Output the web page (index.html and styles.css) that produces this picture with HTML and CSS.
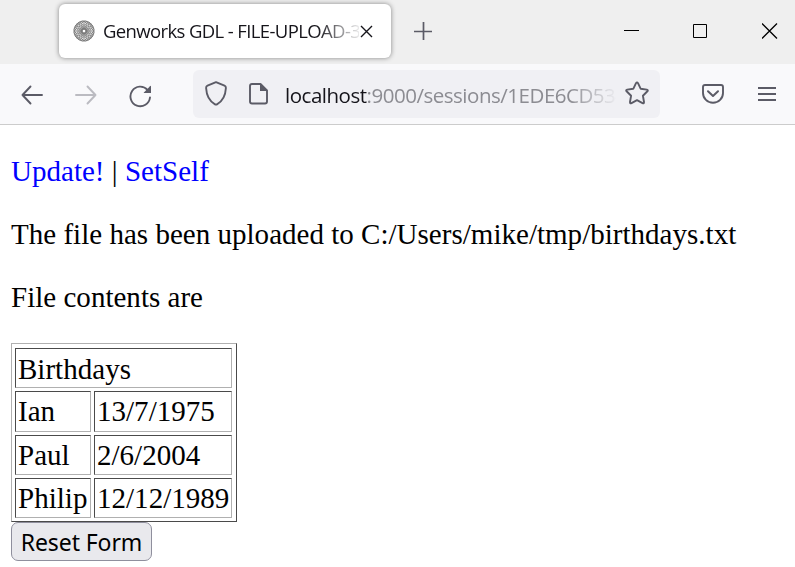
FILE: index.html
```html
<!DOCTYPE html>
<html lang="en">
<head>
<meta charset="utf-8">
<title>Genworks GDL</title>
<link rel="stylesheet" href="styles.css">
</head>
<body>
<header class="tabbar">
  <div class="tab">
    <svg class="favicon" width="22" height="22" viewBox="0 0 22 22">
      <defs>
        <g id="petals">
          <circle cx="11" cy="5.400" r="4.600"/>
          <circle cx="11" cy="5.400" r="4.600" transform="rotate(90 11 11)"/>
          <circle cx="11" cy="5.400" r="4.600" transform="rotate(180 11 11)"/>
          <circle cx="11" cy="5.400" r="4.600" transform="rotate(270 11 11)"/>
        </g>
      </defs>
      <g fill="none" stroke="#555" stroke-width=".5">
        <use href="#petals"/>
        <use href="#petals" transform="rotate(18 11 11)"/>
        <use href="#petals" transform="rotate(36 11 11)"/>
        <use href="#petals" transform="rotate(54 11 11)"/>
        <use href="#petals" transform="rotate(72 11 11)"/>
      </g>
      <circle cx="11" cy="11" r="1.500" fill="#fff"/>
    </svg>
    <span class="tab-title">Genworks GDL - FILE-UPLOAD-3</span>
    <svg class="tab-close" width="13" height="13" viewBox="0 0 13 13"><path d="M1 1l11 11M12 1L1 12" stroke="#15141a" stroke-width="1.4"/></svg>
  </div>
  <svg class="new-tab" width="18" height="18" viewBox="0 0 18 18"><path d="M9.500 0v18M0 9.500h18" stroke="#5b5b66" stroke-width="1.700"/></svg>
  <div class="window-controls">
    <svg width="16" height="16" viewBox="0 0 16 16"><path d="M0 7.500h15" stroke="#000"/></svg>
    <svg width="16" height="16" viewBox="0 0 16 16"><path d="M.5 1.500h13v13H.5z" fill="none" stroke="#000"/></svg>
    <svg width="16" height="16" viewBox="0 0 16 16"><path d="M0 .5l15 15M15 .5l-15 15" stroke="#000" stroke-width="1.300"/></svg>
  </div>
</header>
<nav class="toolbar">
  <svg class="back" width="22" height="20" viewBox="0 0 22 20"><path d="M9.500 1.500L1.500 10l8 8.500M1.500 10H21" fill="none" stroke="#5b5b66" stroke-width="1.900" stroke-linecap="round" stroke-linejoin="round"/></svg>
  <svg class="forward" width="22" height="20" viewBox="0 0 22 20"><path d="M12.500 1.500l8 8.500-8 8.500M20.500 10H1" fill="none" stroke="#bbbbc1" stroke-width="1.900" stroke-linecap="round" stroke-linejoin="round"/></svg>
  <svg class="reload" width="23" height="23" viewBox="0 0 23 23"><path d="M18.500 4.800A9.800 9.800 0 1 0 21 12.500" fill="none" stroke="#5b5b66" stroke-width="1.900" stroke-linecap="round"/><path d="M22 1.500V8h-6.800q-.8 0-.3-.6L21 1.200q1-.8 1 .3z" fill="#5b5b66"/></svg>
  <div class="urlbar">
    <svg class="shield" width="22" height="25" viewBox="0 0 22 25"><path d="M11 1.200L19.500 4.700Q21 5.300 20.900 7C20.500 14.500 18 20 12 23.300Q11 23.800 10 23.300C4 20 1.500 14.500 1.100 7Q1 5.300 2.500 4.700z" fill="none" stroke="#5b5b66" stroke-width="1.900" stroke-linejoin="round"/></svg>
    <svg class="page-icon" width="19" height="22" viewBox="0 0 19 22"><path d="M3 1h8.500L18 7.500V18.500q0 2-2 2H3q-2 0-2-2V3q0-2 2-2z" fill="none" stroke="#5b5b66" stroke-width="1.900" stroke-linejoin="round"/><path d="M11 1v7h7z" fill="#5b5b66"/></svg>
    <span class="url"><b>localhost</b>:9000/sessions/1EDE6CD534</span>
    <svg class="star" width="26" height="25" viewBox="0 0 26 25"><path d="M12 2.200q1-1.600 2 0l2.600 5.500 6.200.9q1.700.4.600 1.700l-4.500 4.400 1.100 6.300q.1 1.700-1.500 1.100L13 19.200l-5.500 2.900q-1.600.6-1.500-1.100l1.100-6.300-4.500-4.400q-1.100-1.300.6-1.700l6.200-.9z" fill="none" stroke="#5b5b66" stroke-width="1.900" stroke-linejoin="round"/></svg>
  </div>
  <svg class="pocket" width="22" height="20" viewBox="0 0 22 20"><path d="M3 1h16q2 0 2 2v6a10 9.800 0 0 1-20 0V3q0-2 2-2z" fill="none" stroke="#5b5b66" stroke-width="1.900"/><path d="M6 7.200l5 4.700 5-4.700" fill="none" stroke="#5b5b66" stroke-width="2" stroke-linecap="round" stroke-linejoin="round"/></svg>
  <svg class="menu" width="18" height="16" viewBox="0 0 18 16"><path d="M0 2h18M0 8h18M0 14h18" stroke="#5b5b66" stroke-width="1.800"/></svg>
</nav>
<main class="content">
  <p><a>Update!</a> | <a>SetSelf</a></p>
  <p>The file has been uploaded to C:/Users/mike/tmp/birthdays.txt</p>
  <p>File contents are</p>
  <table class="birthdays">
    <tr><td class="heading" colspan="2">Birthdays</td></tr>
    <tr class="tall"><td class="name">Ian</td><td>13/7/1975</td></tr>
    <tr><td class="name">Paul</td><td>2/6/2004</td></tr>
    <tr><td class="name">Philip</td><td>12/12/1989</td></tr>
  </table>
  <button class="reset" type="button">Reset Form</button>
</main>
</body>
</html>
```
FILE: styles.css
```css
* { box-sizing: border-box; }
body { margin: 0; background: #fff; height: 567px; overflow: hidden; }
svg { display: block; flex: none; }

.tabbar {
  display: flex;
  align-items: center;
  height: 64px;
  padding: 0 17px 2px 59px;
  background: #efefef;
}
.tab {
  display: flex;
  align-items: center;
  width: 332px;
  height: 54px;
  padding-left: 14px;
  border-radius: 6px;
  background: #fff;
  box-shadow: 0 0 5px rgba(0, 0, 0, .45);
}
.tab-title {
  width: 256px;
  margin-left: 8px;
  overflow: hidden;
  white-space: nowrap;
  font: 18.500px/30px "Open Sans", sans-serif;
  letter-spacing: -.620px;
  color: #15141a;
  mask-image: linear-gradient(to right, #000 214px, transparent 260px);
}
.tab-close { margin-left: 1px; }
.new-tab { margin-left: 23px; }
.window-controls { display: flex; gap: 53px; margin-left: auto; }

.toolbar {
  display: flex;
  align-items: center;
  height: 61px;
  padding: 0 19px 1px 21px;
  background: #f9f9fb;
  border-bottom: 1px solid #ccc;
}
.back { margin-top: 3px; }
.forward { margin: 3px 0 0 32px; }
.reload { margin: 5px 0 0 32px; }
.urlbar {
  display: flex;
  align-items: center;
  width: 467px;
  height: 48px;
  margin-left: 41px;
  padding: 0 10px 0 12px;
  border-radius: 6px;
  background: #f0f0f4;
}
.page-icon { margin-left: 22px; }
.url {
  width: 331px;
  margin: 3px 0 0 17px;
  overflow: hidden;
  white-space: nowrap;
  font: 20.500px/32px "Open Sans", sans-serif;
  letter-spacing: -.480px;
  color: #8c8c92;
  mask-image: linear-gradient(to right, #000 284px, transparent 333px);
}
.url b { font-weight: 400; color: #15141a; }
.star { margin-left: auto; }
.pocket { margin-left: 42px; }
.menu { margin-left: auto; }

.content {
  padding: 30px 11px 0;
  font: 29px/33px "Liberation Serif", serif;
  letter-spacing: .02px;
  color: #000;
}
.content p { margin: 0 0 30px; }
.content p:nth-child(3) { margin-bottom: 29px; }
.content a { color: #00f; }
.birthdays {
  width: 226px;
  padding: 1px 1px 0 0;
  border: 1px solid;
  border-color: #b0b0b0 #4a4a4a #4a4a4a #b0b0b0;
  border-spacing: 3px;
}
.birthdays td {
  height: 40px;
  padding: 0 0 0 2px;
  border: 1px solid;
  border-color: #4a4a4a #b0b0b0 #b0b0b0 #4a4a4a;
}
.birthdays .tall td { height: 41px; }
.birthdays .heading { padding-top: 2px; }
.birthdays .name { width: 76px; }
.reset {
  display: block;
  width: 141px;
  height: 39px;
  padding: 0;
  border: 1px solid #8f8f9d;
  border-radius: 7px;
  background: #e9e9ed;
  font: 23px/36px "Noto Sans", sans-serif;
  letter-spacing: -.1px;
  color: #000;
}
```
